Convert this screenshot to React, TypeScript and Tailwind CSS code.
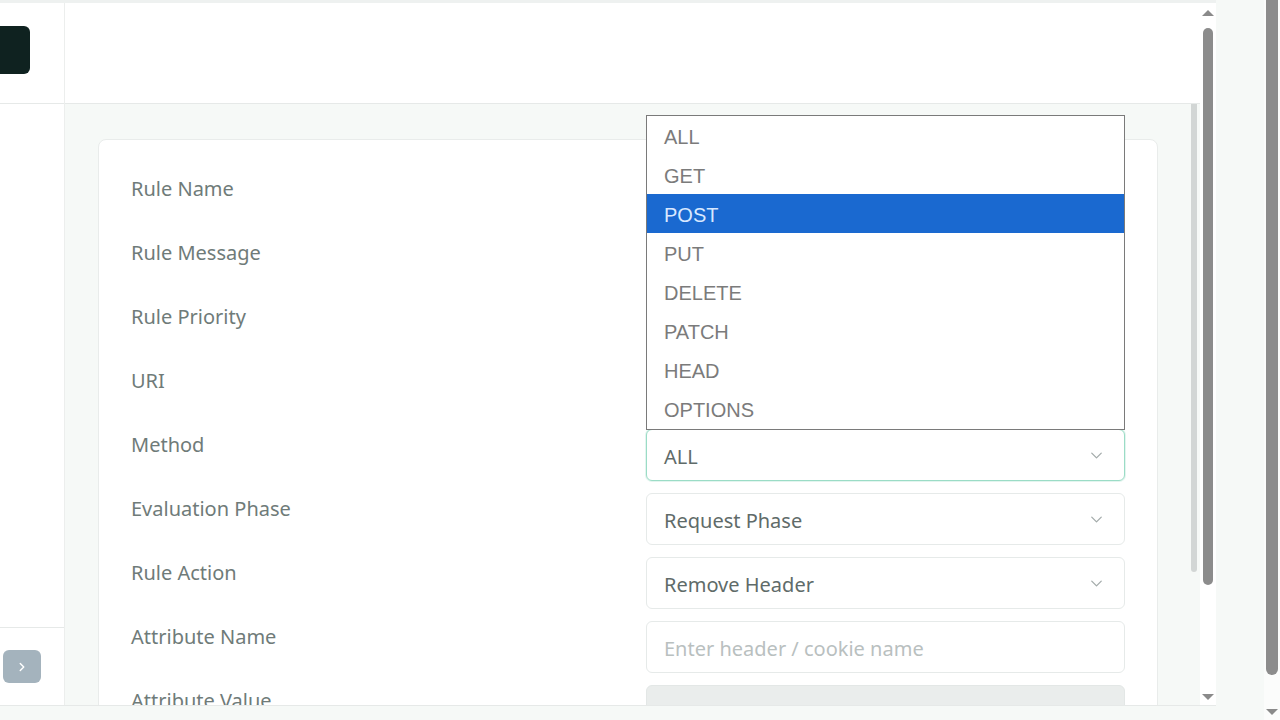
import { ChevronDown, ChevronRight } from "lucide-react";

const rows = [
  { label: "Rule Name" },
  { label: "Rule Message" },
  { label: "Rule Priority" },
  { label: "URI" },
  { label: "Method", value: "ALL", focused: true },
  { label: "Evaluation Phase", value: "Request Phase" },
  { label: "Rule Action", value: "Remove Header" },
  { label: "Attribute Name", placeholder: "Enter header / cookie name" },
  { label: "Attribute Value", disabled: true },
];

const methods = ["ALL", "GET", "POST", "PUT", "DELETE", "PATCH", "HEAD", "OPTIONS"];

function Control({ row }: { row: (typeof rows)[number] }) {
  if (row.value) {
    return (
      <div
        className={
          "relative w-[479px] h-[52px] rounded-md bg-white flex items-center pl-[17px] pr-[18px] text-[20px] text-[#5f6b69] " +
          (row.focused ? "border border-[#9bdcc6] shadow-[0_0_0_1px_#e3f5ef]" : "border border-[#e6eae9]")
        }
      >
        <span className="flex-1 pt-[3px]">{row.value}</span>
        <ChevronDown className="w-[19px] h-[19px] text-[#a3abaa]" strokeWidth={1.6} />
        {row.focused && (
          <div className="absolute left-[-1px] bottom-[50px] w-[479px] h-[315px] bg-white border border-[#7a7a7a] font-['Liberation_Sans',Arial,sans-serif] text-[20px] text-[#7b7b7b] z-10">
            {methods.map((m) => (
              <div
                key={m}
                className={
                  "h-[39px] flex items-center pl-[17px] pt-[2px] " +
                  (m === "POST" ? "bg-[#1a69d0] text-[#d8e8ff]" : "")
                }
              >
                {m}
              </div>
            ))}
          </div>
        )}
      </div>
    );
  }
  if (row.disabled) {
    return <div className="w-[479px] h-[52px] rounded-md bg-[#eaedec] border border-[#e3e7e6]" />;
  }
  return (
    <div className="w-[479px] h-[52px] rounded-md bg-white border border-[#e6eae9] flex items-center pl-[17px] pt-[3px] text-[20px] text-[#b9c0bf]">
      {row.placeholder}
    </div>
  );
}

export default function App() {
  return (
    <div className="w-[1280px] h-[720px] flex overflow-hidden bg-[#f6f9f7] font-['Noto_Sans',sans-serif]">
      {/* App frame */}
      <div className="w-[1216px] flex flex-col">
        <div className="h-[3px] bg-[#eef1f0]" />
        <div className="flex-1 flex min-h-0 bg-white">
          {/* Sidebar */}
          <div className="w-[65px] flex flex-col border-r border-[#eceeed]">
            <div className="h-[101px] border-b border-[#e6e9e8] pt-[23px]">
              <div className="w-[30px] h-[48px] rounded-r-md bg-[#0f2220]" />
            </div>
            <div className="flex-1" />
            <div className="h-[78px] border-t border-[#e6e9e8] pt-[22px] pl-[3px]">
              <div className="w-[38px] h-[33px] rounded-md bg-[#a4b3bd] flex items-center justify-center">
                <ChevronRight className="w-[14px] h-[14px] text-white" strokeWidth={2.5} />
              </div>
            </div>
          </div>

          {/* Main */}
          <div className="w-[1135px] flex flex-col min-h-0">
            <div className="h-[101px] shrink-0 border-b border-[#e6e9e8] bg-white" />
            <div className="flex-1 flex min-h-0 bg-[#f6f9f7] overflow-hidden">
              <div className="flex-1 pl-[33px] pt-[35px]">
                <div className="w-[1060px] bg-white border border-[#e9eceb] rounded-lg px-[32px] pt-[33px]">
                  {rows.map((row) => (
                    <div key={row.label} className="flex items-start mb-[12px]">
                      <div className="flex-1 pt-[2px] text-[20px] leading-7 text-[#6f7b79] whitespace-nowrap">{row.label}</div>
                      <Control row={row} />
                    </div>
                  ))}
                </div>
              </div>
              <div className="w-[10px] pr-[3px]">
                <div className="w-[6px] h-[468px] ml-[1px] rounded-b-full bg-[#d2d6d5]" />
              </div>
            </div>
          </div>

          {/* Frame scrollbar */}
          <div className="w-[16px] flex flex-col items-center bg-white">
            <div className="mt-[7px] w-0 h-0 border-l-[6px] border-r-[6px] border-b-[6px] border-l-transparent border-r-transparent border-b-[#8a8a8a]" />
            <div className="mt-[12px] w-[10px] h-[557px] rounded-full bg-[#8c8c8c]" />
            <div className="flex-1" />
            <div className="mb-[5px] w-0 h-0 border-l-[6px] border-r-[6px] border-t-[6px] border-l-transparent border-r-transparent border-t-[#8a8a8a]" />
          </div>
        </div>
        <div className="h-[15px] border-t border-[#e6e9e8] bg-[#f6f9f7]" />
      </div>

      {/* Page gutter */}
      <div className="flex-1 bg-[#f6f9f7]" />

      {/* Browser scrollbar */}
      <div className="w-[16px] flex flex-col items-center bg-[#fbfcfb]">
        <div className="w-[12px] h-[675px] rounded-b-full bg-[#8c8c8c]" />
        <div className="flex-1" />
        <div className="mb-[5px] w-0 h-0 border-l-[6px] border-r-[6px] border-t-[6px] border-l-transparent border-r-transparent border-t-[#8a8a8a]" />
      </div>

      {/* Mouse pointer */}
      <svg className="absolute left-[813px] top-[220px]" width="14" height="22" viewBox="0 0 14 22">
        <path d="M1 1 L1 17 L5 13 L8 20 L10.5 19 L7.5 12 L13 12 Z" fill="#ffffff" stroke="#111111" strokeWidth="1.2" strokeLinejoin="round" />
      </svg>
    </div>
  );
}
